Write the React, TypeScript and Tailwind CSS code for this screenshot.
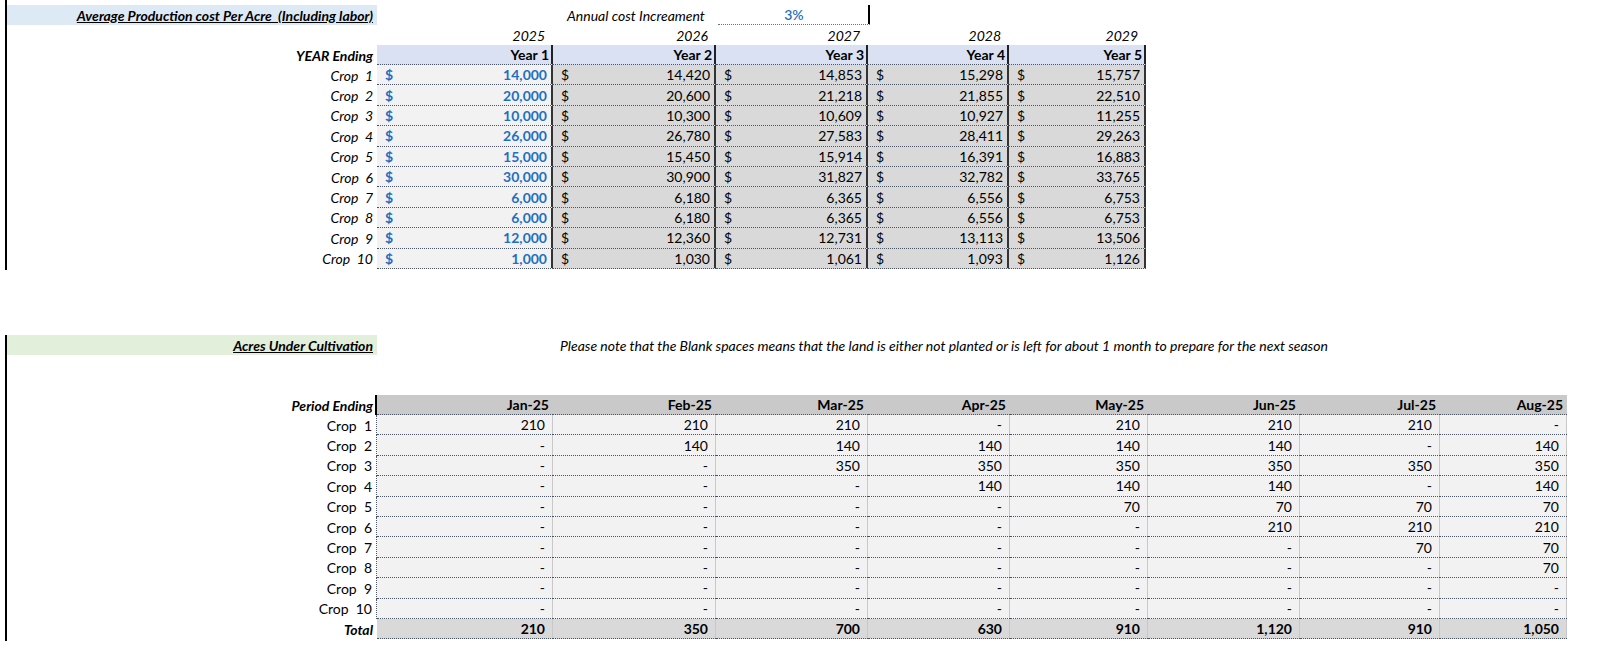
const years = ['2025', '2026', '2027', '2028', '2029'];
const cost = [
  [14000, 14420, 14853, 15298, 15757],
  [20000, 20600, 21218, 21855, 22510],
  [10000, 10300, 10609, 10927, 11255],
  [26000, 26780, 27583, 28411, 29263],
  [15000, 15450, 15914, 16391, 16883],
  [30000, 30900, 31827, 32782, 33765],
  [6000, 6180, 6365, 6556, 6753],
  [6000, 6180, 6365, 6556, 6753],
  [12000, 12360, 12731, 13113, 13506],
  [1000, 1030, 1061, 1093, 1126],
];
const yearW = ['w-[176px]', 'w-[163px]', 'w-[152px]', 'w-[141px]', 'w-[137px]'];

const months = ['Jan-25', 'Feb-25', 'Mar-25', 'Apr-25', 'May-25', 'Jun-25', 'Jul-25', 'Aug-25'];
const monthW = ['w-[176px]', 'w-[163px]', 'w-[152px]', 'w-[142px]', 'w-[138px]', 'w-[152px]', 'w-[140px]', 'w-[127px]'];
const acres = [
  [210, 210, 210, 0, 210, 210, 210, 0],
  [0, 140, 140, 140, 140, 140, 0, 140],
  [0, 0, 350, 350, 350, 350, 350, 350],
  [0, 0, 0, 140, 140, 140, 0, 140],
  [0, 0, 0, 0, 70, 70, 70, 70],
  [0, 0, 0, 0, 0, 210, 210, 210],
  [0, 0, 0, 0, 0, 0, 70, 70],
  [0, 0, 0, 0, 0, 0, 0, 70],
  [0, 0, 0, 0, 0, 0, 0, 0],
  [0, 0, 0, 0, 0, 0, 0, 0],
];
const totals = [210, 350, 700, 630, 910, 1120, 910, 1050];

const fmt = (n: number) => n.toLocaleString('en-US');

export default function App() {
  return (
    <div className="w-[1600px] h-[668px] bg-white text-[14px] text-black overflow-hidden" style={{ fontFamily: 'Lato, "Open Sans", sans-serif' }}>
      {/* production cost section */}
      <div className="ml-[5px] border-l-2 border-black h-[270px] pt-[5px]">
        <div className="flex h-[20px] items-center">
          <div className="w-[370px] h-full bg-[#dde9f5] flex items-center justify-end pr-[4px] italic font-bold underline">
            Average Production cost Per Acre&nbsp; (Including labor)
          </div>
          <div className="w-[190px] shrink-0" />
          <div className="w-[151px] shrink-0 italic">Annual cost Increament</div>
          <div className="w-[152px] h-full border-b border-dotted border-gray-500 shadow-[inset_-2px_0_0_#000] flex items-center justify-center text-[#1f6fc0] font-semibold">3%</div>
        </div>
        <div className="flex h-[20px] items-center">
          <div className="w-[370px]" />
          {years.map((y, i) => (
            <div key={y} className={`${yearW[i]} text-right italic pr-[8px]`}>{y}</div>
          ))}
        </div>
        <div className="flex h-[20px] items-center">
          <div className="w-[370px] text-right italic font-bold pr-[4px]">YEAR Ending</div>
          {years.map((y, i) => (
            <div key={y} className={`${yearW[i]} h-full bg-[#d9e1f2] shadow-[inset_-2px_0_0_#222] text-right font-bold pr-[4px] flex items-center justify-end border-b border-dotted border-gray-600`}>Year {i + 1}</div>
          ))}
        </div>
        {cost.map((r, ri) => (
          <div key={ri} className="flex h-[20.4px] items-center">
            <div className="w-[370px] text-right italic pr-[4px]">Crop&nbsp; {ri + 1}</div>
            {r.map((v, ci) => (
              <div
                key={ci}
                className={`${yearW[ci]} h-full flex items-center justify-between pl-[8px] pr-[6px] shadow-[inset_-2px_0_0_#333] border-b border-dotted border-gray-600 ${ci === 0 ? 'bg-[#f2f2f2] text-[#1f6fc0] font-bold' : 'bg-[#d9d9d9]'}`}
              >
                <span>$</span>
                <span>{fmt(v)}</span>
              </div>
            ))}
          </div>
        ))}
      </div>

      <div className="h-[65px]" />

      {/* acres section */}
      <div className="ml-[5px] border-l-2 border-black h-[306px]">
        <div className="flex h-[20px] items-center">
          <div className="w-[370px] shrink-0 h-full bg-[#e2efda] flex items-center justify-end pr-[4px] italic font-bold underline">Acres Under Cultivation</div>
          <div className="pl-[183px] italic whitespace-nowrap">Please note that the Blank spaces means that the land is either not planted or is left for about 1 month to prepare for the next season</div>
        </div>
        <div className="h-[40px]" />
        <div className="flex h-[20px] items-center">
          <div className="w-[370px] h-full text-right italic font-bold pr-[4px] shadow-[inset_-2px_0_0_#000] flex items-center justify-end">Period Ending</div>
          {months.map((m, i) => (
            <div key={m} className={`${monthW[i]} h-full bg-[#c9c9c9] text-right font-bold pr-[4px] flex items-center justify-end border-b border-dotted border-gray-600`}>{m}</div>
          ))}
        </div>
        {acres.map((r, ri) => (
          <div key={ri} className="flex h-[20.4px] items-center">
            <div className="w-[370px] h-full text-right pr-[4px] border-r border-dotted border-gray-600 flex items-center justify-end">Crop&nbsp; {ri + 1}</div>
            {r.map((v, ci) => (
              <div key={ci} className={`${monthW[ci]} h-full bg-[#f2f2f2] shadow-[inset_-1px_0_0_#c8c8c8] border-b border-dotted border-gray-600 flex items-center justify-end pr-[8px]`}>
                {v ? fmt(v) : '-'}
              </div>
            ))}
          </div>
        ))}
        <div className="flex h-[20.4px] items-center">
          <div className="w-[370px] text-right pr-[4px] italic font-bold">Total</div>
          {totals.map((v, ci) => (
            <div key={ci} className={`${monthW[ci]} h-full bg-[#d9d9d9] shadow-[inset_-1px_0_0_#c8c8c8] border-b border-dotted border-gray-600 flex items-center justify-end pr-[8px] font-bold`}>
              {fmt(v)}
            </div>
          ))}
        </div>
      </div>
    </div>
  );
}
